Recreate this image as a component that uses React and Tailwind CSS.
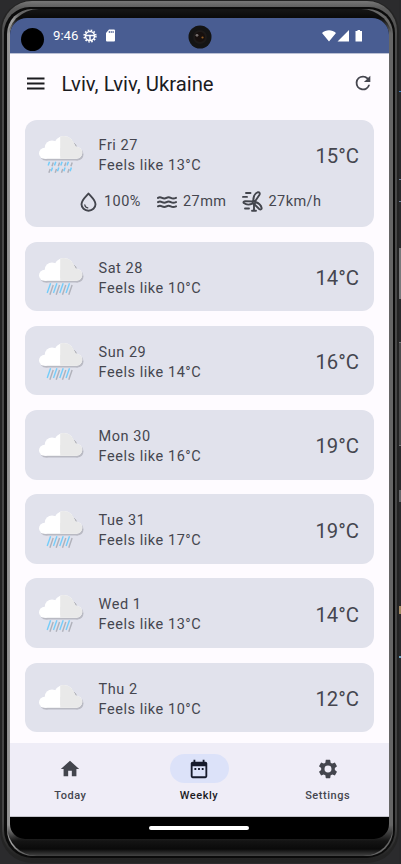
import React from "react";

const days = [
  { day: "Fri 27", feels: "13°C", temp: "15°C", kind: "showers", details: true },
  { day: "Sat 28", feels: "10°C", temp: "14°C", kind: "rain" },
  { day: "Sun 29", feels: "14°C", temp: "16°C", kind: "rain" },
  { day: "Mon 30", feels: "16°C", temp: "19°C", kind: "cloud" },
  { day: "Tue 31", feels: "17°C", temp: "19°C", kind: "rain" },
  { day: "Wed 1", feels: "13°C", temp: "14°C", kind: "rain" },
  { day: "Thu 2", feels: "10°C", temp: "12°C", kind: "cloud" },
];

function CloudShape({ fill, transform }) {
  return (
    <g fill={fill} transform={transform}>
      <circle cx="5.500" cy="17.300" r="5.500" />
      <circle cx="13" cy="11.700" r="7.200" />
      <circle cx="25" cy="10.300" r="10.300" />
      <circle cx="32.500" cy="11.500" r="5" />
      <circle cx="37.300" cy="16.800" r="6" />
      <rect x="5.500" y="12" width="32" height="10.800" />
    </g>
  );
}

function WeatherIcon({ kind }) {
  return (
    <svg className="block shrink-0" width="46" height={kind === "cloud" ? 27 : 39} viewBox={kind === "cloud" ? "0 0 46 27" : "0 0 46 39"}>
      <CloudShape fill="#b9bac3" transform="translate(1.200 1.700)" />
      <CloudShape fill="#ffffff" />
      <svg x="21.200" y="0" width="24" height="26" viewBox="21.200 0 24 26">
        <CloudShape fill="#e9e9e9" />
      </svg>
      <path d="M35.300 7.500c1 .5 1.700 1.400 1.900 2.800" stroke="#9b9ca4" strokeWidth="0.900" fill="none" />
      {kind === "rain" &&
        [0, 6.300, 12.600, 18.900].map((x) => (
          <g key={x} strokeWidth="1.400">
            <path d={`M${11.600 + x} 25.200L${8.200 + x} 35`} stroke="#74cdfa" />
            <path d={`M${14.200 + x} 27L${10.900 + x} 36.800`} stroke="#b0b1ba" />
          </g>
        ))}
      {kind === "showers" &&
        [0, 6.300, 12.600, 18.900].map((x) => (
          <g key={x} strokeWidth="1.500">
            <path d={`M${10.500 + x} 25.800l-1.300 3.700M${13.500 + x} 31.500l-1.300 3.700`} stroke="#74cdfa" />
            <path d={`M${14.300 + x} 26.500l-1.300 3.700M${11.200 + x} 33l-1.300 3.700`} stroke="#b0b1ba" />
          </g>
        ))}
    </svg>
  );
}

function Drop() {
  return (
    <svg width="17" height="20" viewBox="0 0 17 20" fill="none" stroke="#43454d" strokeWidth="1.900" strokeLinecap="round" strokeLinejoin="round">
      <path d="M8.500 1.500C6 4.500 1.500 8 1.500 12.300a7 6.400 0 0 0 14 0C15.500 8 11 4.500 8.500 1.500z" />
      <path d="M4.800 12.800c.1 1.700 1.200 2.800 3 3.100" strokeWidth="1.200" />
    </svg>
  );
}

function Waves() {
  return (
    <svg width="20" height="12" viewBox="0 0 20 12" fill="none" stroke="#43454d" strokeWidth="2" strokeLinecap="round">
      <path d="M1 1.900c1.800-1.100 2.800-.6 4 0s2.800 1 4.500 0 3-.7 4.300 0 2.900 1 5.200 0" />
      <path d="M1 6.100c1.800-1.100 2.800-.6 4 0s2.800 1 4.500 0 3-.7 4.300 0 2.900 1 5.200 0" />
      <path d="M1 10.300c1.800-1.100 2.800-.6 4 0s2.800 1 4.500 0 3-.7 4.300 0 2.900 1 5.200 0" />
    </svg>
  );
}

function Wind() {
  return (
    <svg width="21" height="21" viewBox="0 0 21 21" fill="none" stroke="#43454d" strokeWidth="1.900" strokeLinecap="round" strokeLinejoin="round">
      <path d="M11.300 9.500C11.300 5.700 13 2.300 16 1.200c1.600-.2 2.100 1.300 1.500 2.500L13.300 10" />
      <path d="M13.400 11c3.300 1 5.700 3.200 6.300 6.200 0 1.300-1.400 1.600-2.500.8L12 12.800" />
      <path d="M10.500 12.700c-3.300 1.300-6.400 1.100-8.700-.6-.8-1 .1-2 1.500-2l7.500.4" />
      <circle cx="12" cy="11.200" r="1.300" />
      <path d="M12 13.500v6M10 19.800h4M4 2h4.500M1 5.900h4M3 17.500h4" />
    </svg>
  );
}

function DayCard({ item }) {
  return (
    <section className={`flex flex-col rounded-[12px] bg-[#e1e2ec] ${item.details ? "h-[107px]" : "h-[69.500px]"}`}>
      <div className={`flex h-[69.500px] shrink-0 items-center pr-[15px] pl-[14.500px] ${item.details ? "pt-[1.500px]" : "pt-[3px]"}`}>
        <WeatherIcon kind={item.kind} />
        <div className={`ml-[13.500px] flex-1 text-[14.500px] leading-[20px] tracking-[0.550px] whitespace-nowrap ${item.details ? "pt-[1px]" : "pt-[1.500px]"}`}>
          <p>{item.day}</p>
          <p>Feels like {item.feels}</p>
        </div>
        <p className="text-[20.300px] leading-[26px]">{item.temp}</p>
      </div>
      {item.details && (
        <div className="flex h-6 items-center pl-[55px] text-[14.500px] tracking-[0.420px]">
          <Drop />
          <span className="ml-[7.500px] w-[53px] pt-px">100%</span>
          <Waves />
          <span className="ml-[6px] w-[59px] pt-px">27mm</span>
          <Wind />
          <span className="ml-[5.500px] pt-px">27km/h</span>
        </div>
      )}
    </section>
  );
}

function NavItem({ label, active, children }) {
  return (
    <div className="flex flex-1 flex-col items-center pt-[11px]">
      <div className={`flex h-[29px] w-[59px] items-center justify-center rounded-full ${active ? "bg-[#dce2f9]" : ""}`}>
        <svg width="22" height="22" viewBox="0 0 24 24" fill={active ? "#171b2c" : "#43454d"}>
          {children}
        </svg>
      </div>
      <p className={`mt-[5px] text-[11px] leading-4 font-medium tracking-[0.550px] ${active ? "text-[#1b1b1f]" : "text-[#45464f]"}`}>{label}</p>
    </div>
  );
}

function Screen() {
  return (
    <div className="flex h-[821px] w-[379px] flex-col overflow-hidden rounded-t-[17px] rounded-b-[15px] bg-black">
      <div className="relative flex h-[35px] shrink-0 items-center bg-[#495d92] text-white">
        <span className="ml-[10.500px] h-[23px] w-[23px] shrink-0 translate-y-1 rounded-full bg-black" />
        <span className="ml-[9.500px] pt-px text-[13.200px]">9:46</span>
        <svg className="ml-[5px]" width="14" height="14" viewBox="0 0 14 14" fill="none" stroke="#fff">
          <circle cx="7" cy="7" r="4.500" strokeWidth="1.500" />
          <circle cx="7" cy="7" r="5.900" strokeWidth="1.500" strokeDasharray="1.600 1.489" />
          <path d="M3 6.500h8M7 7v4" strokeWidth="1.500" />
        </svg>
        <svg className="ml-[8px]" width="11" height="13" viewBox="0 0 11 13">
          <path d="M4 .5h5a1 1 0 0 1 1 1v10a1 1 0 0 1-1 1H2a1 1 0 0 1-1-1V4z" fill="#fff" />
          <path d="M4.300 2v2M6.200 2v2M8.100 2v2" stroke="#495d92" />
        </svg>
        <svg className="absolute top-[7px] left-[177.500px]" width="24" height="24" viewBox="0 0 24 24">
          <circle cx="12" cy="12" r="11.500" fill="#141414" />
          <circle cx="12" cy="12" r="7" fill="#1d1a19" />
          <circle cx="12" cy="12" r="5" fill="#17100e" />
          <circle cx="9" cy="10.300" r="1.400" fill="#77706d" />
          <circle cx="14.500" cy="12.500" r="1.100" fill="#8f5a20" />
        </svg>
        <svg className="mr-[26px] ml-auto" width="41" height="14" viewBox="0 0 41 14" fill="#fff">
          <path d="M0 4C4 .2 10 .2 14 4L7 12.500zM15.500 12.500h11.500V1zM35.500 1h2.500v1h2v10.500h-6.500V2h2z" />
        </svg>
      </div>
      <header className="flex h-[67px] shrink-0 items-start border-t border-[#bbc0d4] bg-[#fefbff] pr-[15px] pl-[17px]">
        <svg className="mt-[23px]" width="18" height="13" viewBox="0 0 18 13">
          <path d="M0 1.500h17.500M0 6.500h17.500M0 11.500h17.500" stroke="#1b1b1f" strokeWidth="1.800" />
        </svg>
        <h1 className="mt-[16px] pl-[16.500px] text-[20.300px] leading-7 font-normal text-[#1b1b1f]">Lviv, Lviv, Ukraine</h1>
        <svg className="mt-[18px] ml-auto" width="22" height="22" viewBox="0 0 24 24" fill="#45464f">
          <path d="M17.650 6.350A7.958 7.958 0 0 0 12 4a8 8 0 1 0 7.730 10h-2.080A6 6 0 1 1 12 6c1.660 0 3.140.69 4.220 1.780L13 11h7V4z" />
        </svg>
      </header>
      <main className="flex h-[623px] shrink-0 flex-col gap-[14.700px] bg-[#fefbff] pr-[15px] pl-[14.500px]">
        {days.map((item) => (
          <DayCard key={item.day} item={item} />
        ))}
      </main>
      <nav className="flex h-[74px] shrink-0 gap-2 border-b border-[#c3c3ca] bg-[#efedf7] pr-px">
        <NavItem label="Today">
          <path d="M10 20v-6h4v6h5v-8h3L12 3 2 12h3v8z" />
        </NavItem>
        <NavItem label="Weekly" active>
          <path d="M9 11H7v2h2zm4 0h-2v2h2zm4 0h-2v2h2zm2-7h-1V2h-2v2H8V2H6v2H5a2 2 0 0 0-2 2v14a2 2 0 0 0 2 2h14a2 2 0 0 0 2-2V6a2 2 0 0 0-2-2zm0 16H5V9h14z" />
        </NavItem>
        <NavItem label="Settings">
          <path
            fillRule="evenodd"
            d="M19.430 12.980c.04-.32.070-.64.070-.98s-.03-.66-.07-.98l2.110-1.650c.19-.15.240-.42.120-.64l-2-3.460c-.12-.22-.39-.3-.61-.22l-2.490 1c-.52-.4-1.080-.73-1.690-.98l-.38-2.650A.488.488 0 0 0 14 2h-4c-.25 0-.46.180-.49.420l-.38 2.650c-.61.250-1.170.590-1.690.98l-2.490-1c-.23-.09-.49 0-.61.220l-2 3.460c-.13.220-.07.490.12.640l2.110 1.650c-.04.320-.07.650-.07.980s.03.660.07.980l-2.110 1.650c-.19.150-.24.420-.12.640l2 3.460c.12.220.390.300.61.220l2.490-1c.52.400 1.080.730 1.690.98l.38 2.650c.03.240.240.420.49.420h4c.25 0 .46-.18.49-.42l.38-2.650c.61-.25 1.170-.59 1.690-.98l2.490 1c.23.090.49 0 .61-.22l2-3.460c.12-.22.070-.49-.12-.64zM12 15.800a3.800 3.800 0 1 1 0-7.600 3.800 3.800 0 0 1 0 7.600z"
          />
        </NavItem>
      </nav>
      <div className="flex flex-1 justify-center pt-[9px] pr-px">
        <div className="h-[4px] w-[100px] rounded-full bg-white" />
      </div>
    </div>
  );
}

export default function App() {
  return (
    <div className="flex h-[864px] w-[401px] overflow-hidden bg-[#2b2b2d] font-[Roboto,sans-serif] text-[#45464f]">
      {/* Metal rim, dark groove, inner rim, then the glass bezel */}
      <div className="h-[863px] w-[399px] shrink-0 rounded-[32px] bg-[#242424] px-[2px] pt-px pb-[3px]">
        <div className="h-full rounded-[30px] bg-[linear-gradient(180deg,#777_0,#5c5c5c_7px,#4a4a4a_40px,#444_820px,#222_859px)] px-[2px] pt-[6px] pb-[2px]">
          <div className="h-full rounded-t-[26px] rounded-b-[28px] bg-[#0b0b0b] pt-[2px] pr-[2px] pb-[2px] pl-[2.500px]">
            <div className="h-full rounded-t-[25px] rounded-b-[26px] bg-[linear-gradient(90deg,#8c8c8c_0,#a3a3a3_5px,#666_12px,#666_100%)]">
              <div className="h-full rounded-t-[32px] rounded-b-[30px] bg-[linear-gradient(180deg,#161616_0,#0a0a0a_9px,transparent_24px,transparent_816px,#141414_832px,#0a0a0a_840px,#444_847px)] pt-[9px] pl-[3.500px]">
                <Screen />
              </div>
            </div>
          </div>
        </div>
      </div>
      <div className="flex w-[2px] flex-col bg-[#29292b]">
        <span className="mt-[91px] h-px bg-[#3c7fc4]" />
        <span className="mt-[87px] h-px bg-[#73849c]" />
        <span className="mt-[21px] h-px bg-[#73849c]" />
        <span className="mt-[46px] h-[51px] border border-[#77787a] bg-[#555]" />
        <span className="mt-[43px] h-[104px] border-y border-[#77787a] bg-[#4a4a4b]" />
        <span className="mt-[44px] h-[12px] bg-[#66676a]" />
        <span className="mt-[104px] h-[8px] bg-[#a48a62]" />
        <span className="mt-[42px] h-[2px] bg-[#6ba5c4]" />
      </div>
    </div>
  );
}
